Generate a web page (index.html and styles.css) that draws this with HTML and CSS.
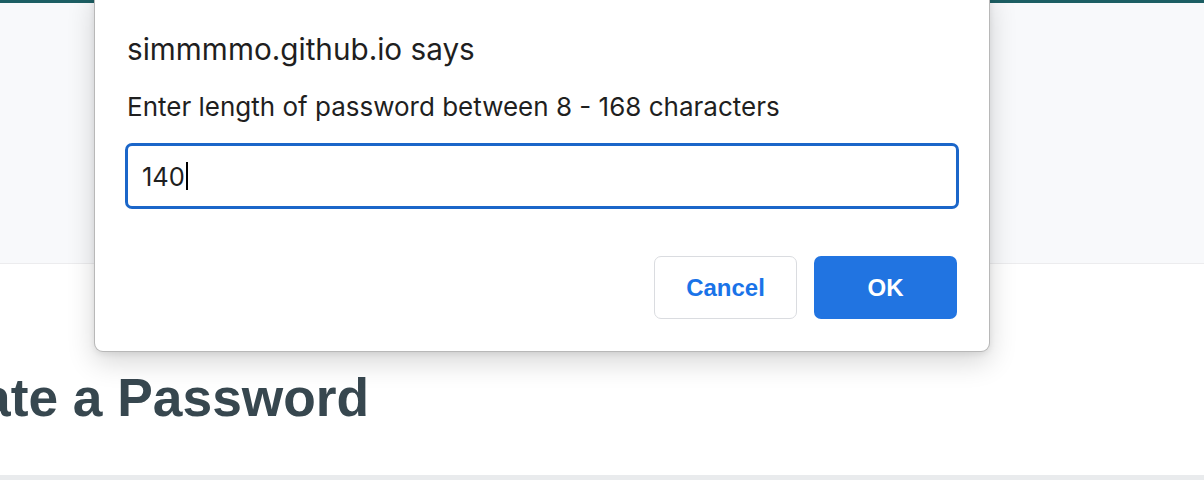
FILE: index.html
```html
<!DOCTYPE html>
<html lang="en">
<head>
<meta charset="utf-8">
<title>Password Generator</title>
<link rel="stylesheet" href="styles.css">
</head>
<body>
  <div class="topbar"></div>
  <header class="hero"></header>
  <main class="content">
    <h1 class="title">Generate a Password</h1>
  </main>
  <div class="band"></div>

  <div class="dialog" role="dialog">
    <div class="dialog-origin">simmmmo.github.io says</div>
    <div class="dialog-message">Enter length of password between 8 - 168 characters</div>
    <div class="dialog-input"><span class="value">140</span><span class="caret"></span></div>
    <div class="dialog-actions">
      <button class="btn btn-cancel">Cancel</button>
      <button class="btn btn-ok">OK</button>
    </div>
  </div>
</body>
</html>
```
FILE: styles.css
```css
html, body {
  margin: 0;
  padding: 0;
  height: 480px;
  overflow: hidden;
  background: #ffffff;
}
body {
  position: relative;
  font-family: "Liberation Sans", Arial, sans-serif;
}
.topbar {
  height: 3px;
  background: #1c5e63;
}
.hero {
  height: 260px;
  background: #f8f9fb;
  border-bottom: 1px solid #ececee;
}
.content {
  height: 211px;
  overflow: hidden;
}
.title {
  margin: 0;
  padding-top: 104px;
  margin-left: -173px;
  font-family: "Liberation Sans", Arial, sans-serif;
  font-weight: 700;
  font-size: 53.3px;
  line-height: 60px;
  color: #37474f;
  white-space: nowrap;
}
.band {
  height: 6px;
  background: #e9ebed;
}

.dialog {
  position: absolute;
  left: 94px;
  top: -12px;
  box-sizing: border-box;
  width: 896px;
  height: 364px;
  padding: 0 32px;
  background: #ffffff;
  border: 1px solid rgba(0, 0, 0, 0.28);
  border-radius: 9px;
  box-shadow: 0 10px 28px rgba(0, 0, 0, 0.16), 0 2px 6px rgba(0, 0, 0, 0.08);
  font-family: Inter, "Noto Sans", sans-serif;
  color: #1f1f1f;
}
.dialog-origin {
  margin-top: 42px;
  font-size: 29.7px;
  line-height: 36px;
}
.dialog-message {
  margin-top: 24px;
  font-size: 26px;
  line-height: 32px;
}
.dialog-input {
  box-sizing: border-box;
  margin-top: 20px;
  margin-left: -2px;
  width: 834px;
  height: 66px;
  border: 3px solid #1b66c9;
  border-radius: 7px;
  display: flex;
  align-items: center;
  padding-left: 14px;
  font-size: 25.5px;
  color: #1f1f1f;
}
.caret {
  display: inline-block;
  width: 2px;
  height: 28px;
  background: #000;
  margin-left: 1px;
}
.dialog-actions {
  display: flex;
  justify-content: flex-end;
  gap: 17px;
  margin-top: 47px;
}
.btn {
  box-sizing: border-box;
  width: 143px;
  height: 63px;
  border-radius: 7px;
  font-family: "Liberation Sans", Arial, sans-serif;
  font-weight: 700;
  font-size: 24px;
  cursor: pointer;
}
.btn-cancel {
  background: #ffffff;
  color: #1a73e8;
  border: 1px solid #dadce0;
}
.btn-ok {
  background: #2174e1;
  color: #ffffff;
  border: none;
}
```
